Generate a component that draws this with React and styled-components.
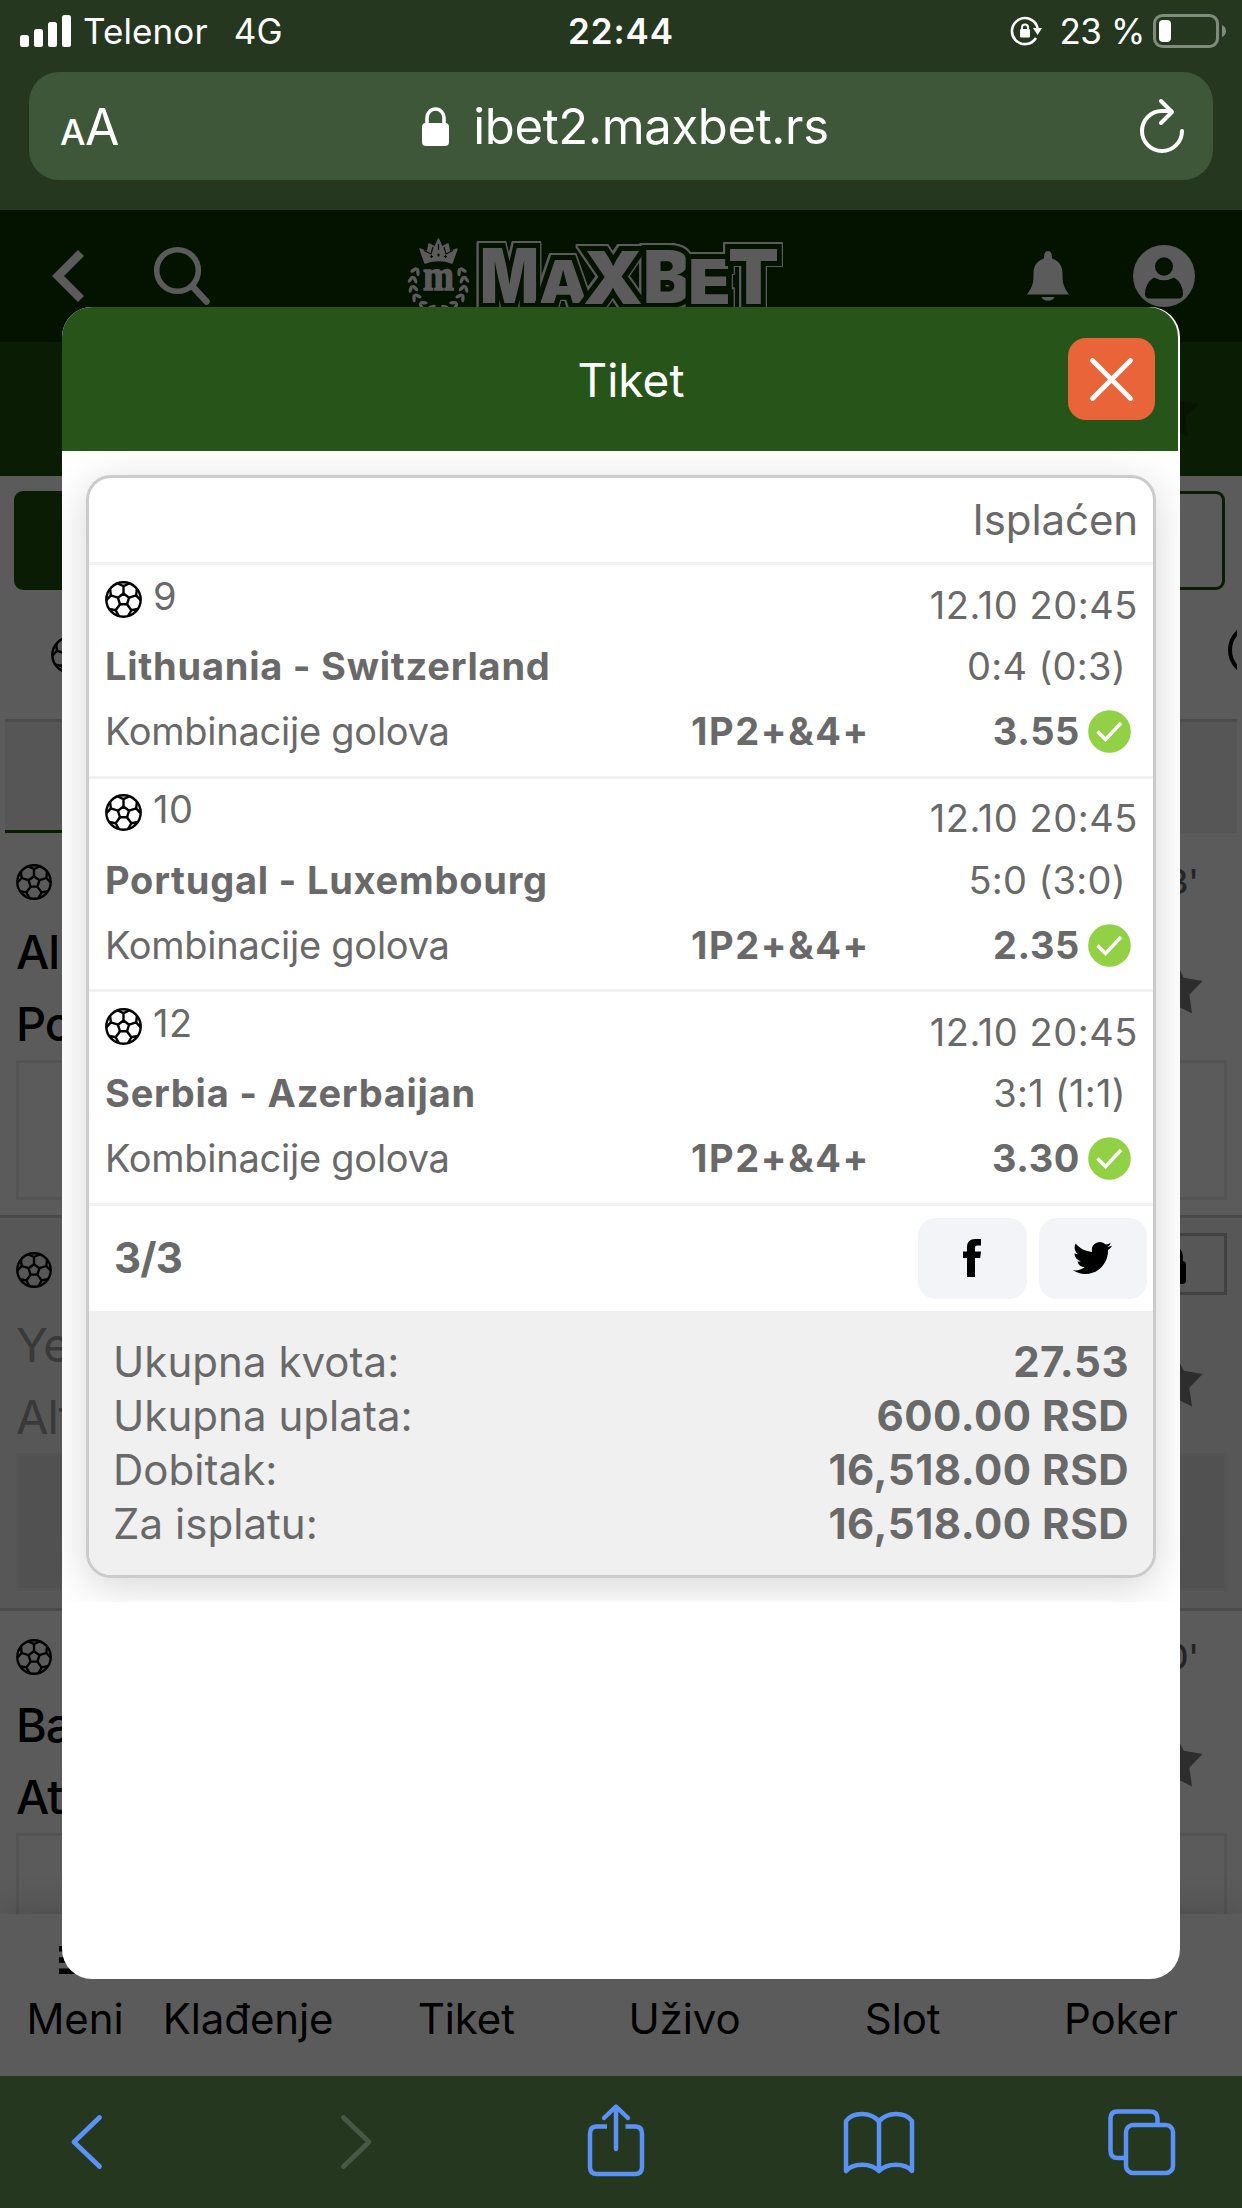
import React from "react";
import styled, { createGlobalStyle } from "styled-components";

const C = {
  chrome: "#25371f",
  field: "#3f5739",
  dim: "#5b5b5b",
  header: "#041200",
  band: "#0b1c04",
  green: "#275519",
  text: "#696969",
  blue: "#5a92f5",
};

const GlobalStyle = createGlobalStyle`
  * { box-sizing: border-box; }
  body { margin: 0; }
  svg { display: block; flex: none; overflow: visible; }
`;

const Screen = styled.div`
  width: 1242px;
  height: 2208px;
  display: flex;
  flex-direction: column;
  overflow: hidden;
  background: ${C.dim};
  font-family: Inter, "Liberation Sans", sans-serif;
  font-feature-settings: "calt" 0;
  white-space: nowrap;
`;

/* ---------- browser chrome ---------- */
const Chrome = styled.header`
  flex: none;
  height: 210px;
  background: ${C.chrome};
  color: #fff;
`;
const StatusBar = styled.div`
  height: 72px;
  padding: 0 16px 10px 20px;
  display: grid;
  grid-template-columns: 1fr auto 1fr;
  align-items: center;
  font-size: 35px;
`;
const StatusSide = styled.div`
  display: flex;
  align-items: center;
  justify-content: ${(p) => (p.$end ? "flex-end" : "flex-start")};
`;
const Carrier = styled.span`
  margin-left: 12px;
  letter-spacing: 0.1px;
`;
const Network = styled.span`
  margin-left: 26px;
  letter-spacing: 0.2px;
`;
const Time = styled.span`
  margin-right: 4px;
  font-weight: 600;
  letter-spacing: 0.9px;
`;
const Percent = styled.span`
  margin: 0 8px 0 17px;
  letter-spacing: -0.4px;
`;
const AddressBar = styled.div`
  height: 108px;
  margin: 0 29px;
  padding: 0 29px 0 31px;
  border-radius: 30px;
  background: ${C.field};
  display: grid;
  grid-template-columns: 57px 1fr 44px;
  align-items: center;
`;
const TextSize = styled.span`
  display: flex;
  align-items: baseline;
  gap: 1px;
  padding-top: 2px;
  font-size: 50px;
  letter-spacing: -1.5px;
`;
const SmallA = styled.span`
  font-size: 36px;
  font-weight: 500;
`;
const Address = styled.div`
  display: flex;
  align-items: center;
  justify-content: center;
  gap: 24px;
  padding-right: 6px;
  font-size: 49px;
  letter-spacing: -0.35px;
`;

/* ---------- page behind the dialog ---------- */
const Page = styled.main`
  position: relative;
  flex: 1;
  min-height: 0;
  display: flex;
  flex-direction: column;
`;
const PageHeader = styled.div`
  flex: none;
  height: 132px;
  padding: 0 47px 0 53px;
  display: flex;
  align-items: center;
  background: ${C.header};
`;
const Spacer = styled.div`
  flex: none;
  width: ${(p) => p.$w}px;
`;
const Band = styled.div`
  flex: none;
  height: 134px;
  padding: 8px 42px 0 0;
  display: flex;
  justify-content: flex-end;
  align-items: center;
  background: ${C.band};
`;
const Switcher = styled.div`
  flex: none;
  height: 114px;
  padding: 15px 17px 0 14px;
  display: flex;
`;
const SwitchHalf = styled.div`
  flex: 1;
  border: 3px solid ${C.band};
  border-radius: ${(p) => (p.$on ? "9px 0 0 9px" : "0 9px 9px 0")};
  background: ${(p) => (p.$on ? C.band : "transparent")};
`;
const Sports = styled.div`
  flex: none;
  height: 129px;
  margin: 0 5px;
  padding: 0 0 0 46px;
  display: flex;
  align-items: center;
  justify-content: space-between;
  overflow: hidden;
`;
const SportRing = styled.div`
  flex: none;
  width: 54px;
  height: 54px;
  margin: 0 -45px 10px 0;
  border: 4px solid #000;
  border-radius: 50%;
`;
const Tabs = styled.div`
  flex: none;
  height: 114px;
  margin: 0 5px;
  display: flex;
  border-top: 3px solid #4c4c4c;
  background: #565656;
`;
const Tab = styled.div`
  flex: 1;
  border-bottom: 3px solid ${(p) => (p.$on ? C.band : "#565656")};
`;
const Events = styled.div`
  flex: 1;
  min-height: 0;
  overflow: hidden;
`;
const Event = styled.div`
  height: ${(p) => p.$h}px;
  padding: 0 15px 0 16px;
  border-bottom: 3px solid #4a4a4a;
  background: ${(p) => (p.$locked ? "#575757" : C.dim)};
`;
const EventHead = styled.div`
  height: ${(p) => p.$h}px;
  padding-top: ${(p) => p.$top}px;
  display: flex;
  align-items: flex-start;
  justify-content: space-between;
`;
const Minute = styled.span`
  margin-right: 28px;
  font-size: 34px;
  line-height: 35px;
  font-weight: 500;
  color: #242424;
`;
const LockBox = styled.div`
  width: 110px;
  height: 62px;
  margin-top: -19px;
  border: 3px solid #424242;
  display: flex;
  align-items: center;
  justify-content: center;
`;
const Teams = styled.div`
  height: 144px;
  padding: 0 23px 0 0;
  display: flex;
  align-items: center;
  justify-content: space-between;
  color: ${(p) => (p.$locked ? "#393939" : "#000")};
  font-size: 47px;
  line-height: 72px;
  font-weight: ${(p) => (p.$locked ? 400 : 500)};
  letter-spacing: -1px;
`;
const Favourite = styled.div`
  padding-top: 4px;
`;
const OddsBox = styled.div`
  height: ${(p) => (p.$locked ? 138 : 140)}px;
  border: 3px solid #545454;
  background: ${(p) => (p.$locked ? "#515151" : "transparent")};
`;
const BottomNav = styled.nav`
  flex: none;
  position: relative;
  height: 162px;
  padding: 0 12px 0 11px;
  display: grid;
  grid-template-columns: 128px repeat(5, 1fr);
  background: ${C.dim};
  box-shadow: 0 0 36px rgba(0, 0, 0, 0.2);
`;
const NavItem = styled.div`
  display: flex;
  flex-direction: column;
  align-items: center;
  font-size: 42px;
  line-height: 28px;
  letter-spacing: -0.1px;
  color: #000;
`;
const NavIcon = styled.div`
  height: 91px;
  display: flex;
  align-items: center;
`;

/* ---------- ticket dialog ---------- */
const Dialog = styled.section`
  position: absolute;
  left: 62px;
  top: 97px;
  width: 1118px;
  height: 1672px;
  border-radius: 30px;
  background: #fff;
  overflow: hidden;
  color: ${C.text};
`;
const DialogHeader = styled.div`
  height: 144px;
  margin-right: 2px;
  padding: 0 23px 0 132px;
  display: flex;
  align-items: center;
  border-top-right-radius: 30px;
  background: ${C.green};
`;
const Title = styled.h1`
  flex: 1;
  margin: 0;
  padding-top: 1px;
  text-align: center;
  font-size: 46px;
  font-weight: 400;
  color: #fff;
`;
const CloseButton = styled.button`
  width: 87px;
  height: 82px;
  padding: 0;
  border: 0;
  border-radius: 18px;
  background: #ea6439;
  display: flex;
  align-items: center;
  justify-content: center;
`;
const TicketArea = styled.div`
  height: 1151px;
  padding: 24px;
  overflow: hidden;
`;
const Ticket = styled.div`
  height: 1103px;
  border: 3px solid #cbcbcb;
  border-radius: 25px;
  background: #fff;
  box-shadow: 0 9px 42px rgba(0, 0, 0, 0.16);
  display: flex;
  flex-direction: column;
  overflow: hidden;
`;
const TicketStatus = styled.div`
  height: 87px;
  padding: 0 15px 0 0;
  border-bottom: 3px solid #f1f1f1;
  font-size: 42px;
  line-height: 83px;
  letter-spacing: -0.1px;
  text-align: right;
`;
const Pick = styled.article`
  height: 213.67px;
  padding-top: 4px;
  border-bottom: 3px solid #f1f1f1;
  font-size: 38px;
`;
const PickTop = styled.div`
  height: 60px;
  padding: 0 15px 0 16px;
  display: flex;
  align-items: center;
`;
const PickNumber = styled.span`
  flex: 1;
  margin-left: 11px;
  padding-bottom: 7px;
  letter-spacing: 0.5px;
`;
const PickDate = styled.span`
  padding-top: 11px;
  letter-spacing: 0.55px;
`;
const PickMatch = styled.div`
  height: 73px;
  padding: 1px 27px 0 16px;
  display: flex;
  align-items: center;
  justify-content: space-between;
`;
const Match = styled.strong`
  font-weight: 700;
  letter-spacing: 0.76px;
`;
const Score = styled.span`
  letter-spacing: 0.3px;
`;
const PickBet = styled.div`
  height: 59px;
  padding: 0 22px 0 16px;
  display: grid;
  grid-template-columns: 1fr 248px 149px 43px;
  align-items: center;
`;
const Market = styled.span`
  padding-bottom: 1px;
  letter-spacing: -0.25px;
`;
const Code = styled.strong`
  font-weight: 700;
  padding-bottom: 1px;
  letter-spacing: 1.6px;
`;
const Odd = styled.strong`
  font-weight: 700;
  text-align: right;
  padding: 0 8px 1px 0;
  letter-spacing: 0.6px;
`;
const ShareRow = styled.div`
  height: 105px;
  padding: 0 6px 0 25px;
  display: flex;
  align-items: center;
  gap: 12px;
`;
const Count = styled.strong`
  flex: 1;
  padding-bottom: 2px;
  font-size: 42px;
  font-weight: 700;
  letter-spacing: -0.8px;
`;
const ShareButton = styled.button`
  width: 108.500px;
  height: 81px;
  padding: 0;
  border: 0;
  border-radius: 18px;
  background: #f3f4f7;
  display: flex;
  align-items: center;
  justify-content: center;
`;
const Summary = styled.div`
  flex: 1;
  padding: 24px 24px 0 24px;
  background: #f0f0f0;
`;
const SummaryRow = styled.div`
  display: flex;
  justify-content: space-between;
  font-size: 42px;
  line-height: 54px;
  letter-spacing: 0.05px;
`;
const Amount = styled.strong`
  font-weight: 700;
  letter-spacing: 0.5px;
`;

/* ---------- browser toolbar ---------- */
const Toolbar = styled.footer`
  flex: none;
  position: relative;
  height: 132px;
  display: grid;
  grid-template-columns: 173px 367px 152px 374px 151px;
  align-items: center;
  justify-items: center;
  background: ${C.chrome};
`;

/* ---------- drawings ---------- */
const pt = (r, deg) => {
  const a = (deg * Math.PI) / 180;
  return `${(50 + r * Math.cos(a)).toFixed(1)} ${(50 + r * Math.sin(a)).toFixed(1)}`;
};
const spokes = [-90, -18, 54, 126, 198];

const Ball = ({ size = 37 }) => (
  <svg width={size} height={size} viewBox="0 0 100 100" fill="none" stroke="#000" strokeWidth="6.500" strokeLinejoin="round">
    <circle cx="50" cy="50" r="46.500" />
    <path d={`M${spokes.map((a) => pt(16, a)).join("L")}Z`} />
    {spokes.map((a) => (
      <path key={a} d={`M${pt(16, a)}L${pt(36, a)}M${pt(46, a - 20)}L${pt(36, a)}L${pt(46, a + 20)}`} />
    ))}
  </svg>
);

const Star = ({ fill = "#2d2d2d" }) => {
  const p = [];
  for (let i = 0; i < 10; i++) p.push(pt(i % 2 ? 26 : 50, -90 + i * 36));
  return (
    <svg width="58" height="58" viewBox="0 0 100 100">
      <path d={`M${p.join("L")}Z`} fill={fill} />
    </svg>
  );
};

const Signal = () => (
  <svg width="51" height="32" viewBox="0 0 51 32" fill="#fff">
    <rect x="0" y="20" width="9" height="12" rx="2.5" />
    <rect x="14" y="14" width="9" height="18" rx="2.5" />
    <rect x="28" y="7" width="9" height="25" rx="2.5" />
    <rect x="42" y="0" width="9" height="32" rx="2.5" />
  </svg>
);

const RotationLock = () => (
  <svg width="32" height="30" viewBox="1011 17 32 30" fill="none" stroke="#fff" strokeWidth="2.6">
    <path d="M1037 39 A13 13 0 1 1 1038.6 29" />
    <path d="M1034 29 H1043 L1038.6 36Z" fill="#fff" stroke="none" />
    <rect x="1021" y="30" width="10" height="8.5" rx="1.2" fill="#fff" stroke="none" />
    <path d="M1023 31 V28.5 a3 3 0 0 1 6 0 V31" strokeWidth="2" />
  </svg>
);

const Battery = () => (
  <svg width="73" height="34" viewBox="0 0 73 34">
    <rect x="1.5" y="1.5" width="63" height="31" rx="8" fill="none" stroke="#7f8b7b" strokeWidth="3" />
    <rect x="6" y="6" width="12" height="22" rx="4" fill="#fff" />
    <path d="M69 11 q4 2 4 6 t-4 6z" fill="#7f8b7b" />
  </svg>
);

const Padlock = ({ fill = "#fff" }) => (
  <svg width="27" height="39" viewBox="0 0 27 39">
    <rect x="0" y="16" width="27" height="23" rx="4" fill={fill} />
    <path d="M5 18 V11 a8.5 9 0 0 1 17 0 V18" fill="none" stroke={fill} strokeWidth="3.6" />
  </svg>
);

const Reload = () => (
  <svg width="44" height="54" viewBox="1140 99 44 54" fill="none" stroke="#fff" strokeWidth="4" strokeLinecap="round" strokeLinejoin="round">
    <path d="M1182 131 A20 20 0 1 1 1162 111 H1171" />
    <path d="M1161 101 L1172 112 L1161 123" />
  </svg>
);

const Leaf = ({ a, r = 26 }) => {
  const t = (a * Math.PI) / 180;
  const x = 438.5 + r * Math.cos(t);
  const y = 284 + r * Math.sin(t);
  const d = a > 90 ? 1 : -1;
  return (
    <g transform={`translate(${x.toFixed(1)} ${y.toFixed(1)}) rotate(${a + 90})`}>
      <ellipse cx="0" cy="-2.600" rx="4" ry="1.700" transform={`rotate(${30 * d})`} />
      <ellipse cx="0" cy="2.600" rx="4" ry="1.700" transform={`rotate(${-30 * d})`} />
    </g>
  );
};

const LogoText = styled.text`
  font-family: Inter, sans-serif;
  font-weight: 900;
  fill: ${C.dim};
  stroke: ${C.header};
  stroke-width: 10px;
  paint-order: stroke;
  filter: drop-shadow(1.1px 0 0 ${C.dim}) drop-shadow(-1.1px 0 0 ${C.dim}) drop-shadow(0 1.1px 0 ${C.dim})
    drop-shadow(0 -1.1px 0 ${C.dim});
`;
const CrestLetter = styled.text`
  font-family: "Liberation Serif", serif;
  font-weight: 700;
  font-size: 45px;
  fill: ${C.dim};
  stroke: ${C.dim};
  stroke-width: 1.5px;
`;

const Logo = () => (
  <svg width="378" height="78" viewBox="408 237 378 78" role="img">
    <g fill={C.dim}>
      {[207, 187, 167, 147, 125, 103].map((a) => (
        <Leaf key={a} a={a} />
      ))}
      {[-27, -7, 13, 33, 55, 77].map((a) => (
        <Leaf key={a} a={a} />
      ))}
    </g>
    <path
      d="M425 263 L420 249 L427.500 252 L429 244 L435 247 L438.500 239 L442 247 L448 244 L449.500 252 L457 249 L452 263 Q438.500 258 425 263Z"
      fill={C.dim}
      stroke={C.dim}
      strokeWidth="1.500"
      strokeLinejoin="round"
    />
    <path d="M424 250.500 L431 254 L433 247 M453 250.500 L446 254 L444 247 M438.500 244 V250" stroke={C.header} strokeWidth="1.200" fill="none" />
    <path d="M430 256.500 h3 M437 255 h3 M444 256.500 h3 M431.500 255 v3 M438.500 253.500 v3 M445.500 255 v3" stroke={C.header} strokeWidth="1.200" />
    <CrestLetter x="423" y="290" textLength="31" lengthAdjust="spacingAndGlyphs">
      m
    </CrestLetter>
    <LogoText>
      <tspan x="480" y="303" fontSize="75" textLength="59" lengthAdjust="spacingAndGlyphs">M</tspan>
      <tspan x="539" y="303" fontSize="59" textLength="49" lengthAdjust="spacingAndGlyphs">A</tspan>
      <tspan x="583" y="304" fontSize="73" textLength="60" lengthAdjust="spacingAndGlyphs">X</tspan>
      <tspan x="643" y="303" fontSize="73" textLength="48" lengthAdjust="spacingAndGlyphs">B</tspan>
      <tspan x="688" y="304" fontSize="62" textLength="43" lengthAdjust="spacingAndGlyphs">E</tspan>
      <tspan x="728" y="304" fontSize="76" textLength="51" lengthAdjust="spacingAndGlyphs">T</tspan>
    </LogoText>
  </svg>
);

const Facebook = () => (
  <svg width="18" height="38" viewBox="0 0 18 38">
    <path d="M4 38V19H0V12.500H4V8.500C4 3 7 0 12.300 0H18V6.500H14.500C12.500 6.500 12 7.500 12 9V12.500H18L17.200 19H12V38Z" />
  </svg>
);
const Twitter = () => (
  <svg width="39" height="32" viewBox="0 2.200 24 19.600" preserveAspectRatio="none">
    <path d="M23.953 4.570a10 10 0 0 1-2.825.775 4.958 4.958 0 0 0 2.163-2.723c-.951.555-2.005.959-3.127 1.184a4.920 4.920 0 0 0-8.384 4.482C7.690 8.095 4.067 6.130 1.640 3.162a4.822 4.822 0 0 0-.666 2.475c0 1.710.870 3.213 2.188 4.096a4.904 4.904 0 0 1-2.228-.616v.060a4.923 4.923 0 0 0 3.946 4.827 4.996 4.996 0 0 1-2.212.085 4.936 4.936 0 0 0 4.604 3.417 9.867 9.867 0 0 1-6.102 2.105c-.390 0-.779-.023-1.170-.067a13.995 13.995 0 0 0 7.557 2.209c9.053 0 13.998-7.496 13.998-13.985 0-.210 0-.420-.015-.630A9.935 9.935 0 0 0 24 4.590z" />
  </svg>
);
const Check = () => (
  <svg width="43" height="43" viewBox="0 0 43 43">
    <circle cx="21.500" cy="21.500" r="21.300" fill="#92d146" />
    <path d="M9.500 21.500 L17.500 29.500 L33 13" fill="none" stroke="#fff" strokeWidth="3.400" />
  </svg>
);

/* ---------- data ---------- */
const picks = [
  { no: "9", date: "12.10 20:45", match: "Lithuania - Switzerland", score: "0:4 (0:3)", odd: "3.55" },
  { no: "10", date: "12.10 20:45", match: "Portugal - Luxembourg", score: "5:0 (3:0)", odd: "2.35" },
  { no: "12", date: "12.10 20:45", match: "Serbia - Azerbaijan", score: "3:1 (1:1)", odd: "3.30" },
];
const totals = [
  ["Ukupna kvota:", "27.53"],
  ["Ukupna uplata:", "600.00 RSD"],
  ["Dobitak:", "16,518.00 RSD"],
  ["Za isplatu:", "16,518.00 RSD"],
];
const events = [
  { home: "Al", away: "Po", minute: "3'", h: 385, head: 83, top: 31 },
  { home: "Ye", away: "Alt", locked: true, h: 393, head: 91, top: 34 },
  { home: "Ba", away: "At", minute: "0'", h: 393, head: 78, top: 28 },
];
const nav = ["Meni", "Klađenje", "Tiket", "Uživo", "Slot", "Poker"];

export default function App() {
  return (
    <Screen>
      <GlobalStyle />
      <Chrome>
        <StatusBar>
          <StatusSide>
            <Signal />
            <Carrier>Telenor</Carrier>
            <Network>4G</Network>
          </StatusSide>
          <Time>22:44</Time>
          <StatusSide $end>
            <RotationLock />
            <Percent>23 %</Percent>
            <Battery />
          </StatusSide>
        </StatusBar>
        <AddressBar>
          <TextSize>
            <SmallA>A</SmallA>A
          </TextSize>
          <Address>
            <Padlock />
            ibet2.maxbet.rs
          </Address>
          <Reload />
        </AddressBar>
      </Chrome>

      <Page>
        <PageHeader>
          <svg width="31" height="52" viewBox="53 249 31 52" fill="none" stroke={C.dim} strokeWidth="8.500">
            <path d="M81 252 L58 275 L81 298" />
          </svg>
          <Spacer $w={70} />
          <svg width="56" height="59" viewBox="154 247 56 59" fill="none" stroke={C.dim} strokeLinecap="round">
            <circle cx="177.500" cy="270.500" r="20.800" strokeWidth="5.600" />
            <path d="M193 287 L206.500 301.500" strokeWidth="6.500" />
          </svg>
          <Spacer $w={198} />
          <Logo />
          <Spacer $w={241} />
          <svg width="42" height="50" viewBox="0 0 42 50" fill={C.dim}>
            <path d="M21 0 C24 0 25 2.500 25 7.500 C32 10 35.500 15 35.500 22 C35.500 32 36 35 42 43.500 H0 C6 35 6.500 32 6.500 22 C6.500 15 10 10 17 7.500 C17 2.500 18 0 21 0Z" />
            <path d="M14.500 46 H27.500 C26 51 16 51 14.500 46Z" />
          </svg>
          <Spacer $w={64} />
          <svg width="62" height="62" viewBox="0 0 62 62">
            <circle cx="31" cy="31" r="31" fill={C.dim} />
            <ellipse cx="31" cy="21.500" rx="9" ry="9.300" fill={C.header} />
            <path d="M21 32.500 Q31 38 41 32.500 Q50 38 50 49 Q50 53.500 45.500 53.500 H16.500 Q12 53.500 12 49 Q12 38 21 32.500Z" fill={C.header} />
          </svg>
        </PageHeader>
        <Band>
          <Star fill="#081503" />
        </Band>
        <Switcher>
          <SwitchHalf $on />
          <SwitchHalf />
        </Switcher>
        <Sports>
          <Ball size={38} />
          <SportRing />
        </Sports>
        <Tabs>
          <Tab $on />
          <Tab />
          <Tab />
        </Tabs>
        <Events>
          {events.map((e) => (
            <Event key={e.home} $h={e.h} $locked={e.locked}>
              <EventHead $h={e.head} $top={e.top}>
                <Ball size={36} />
                {e.locked ? (
                  <LockBox>
                    <Padlock fill="#000" />
                  </LockBox>
                ) : (
                  <Minute>{e.minute}</Minute>
                )}
              </EventHead>
              <Teams $locked={e.locked}>
                <div>
                  <div>{e.home}</div>
                  <div>{e.away}</div>
                </div>
                <Favourite>
                  <Star />
                </Favourite>
              </Teams>
              <OddsBox $locked={e.locked} />
            </Event>
          ))}
        </Events>
        <BottomNav>
          {nav.map((label, i) => (
            <NavItem key={label}>
              <NavIcon>
                {i === 0 && (
                  <svg width="32" height="28" viewBox="0 0 32 28">
                    <path d="M0 2.750H32M0 14H32M0 25.250H32" stroke="#000" strokeWidth="5.500" />
                  </svg>
                )}
              </NavIcon>
              {label}
            </NavItem>
          ))}
        </BottomNav>

        <Dialog>
          <DialogHeader>
            <Title>Tiket</Title>
            <CloseButton>
              <svg width="43" height="43" viewBox="0 0 43 43" stroke="#fff" strokeWidth="4.800" strokeLinecap="round">
                <path d="M2.500 2.500 L40.500 40.500 M40.500 2.500 L2.500 40.500" />
              </svg>
            </CloseButton>
          </DialogHeader>
          <TicketArea>
            <Ticket>
              <TicketStatus>Isplaćen</TicketStatus>
              {picks.map((p) => (
                <Pick key={p.no}>
                  <PickTop>
                    <Ball />
                    <PickNumber>{p.no}</PickNumber>
                    <PickDate>{p.date}</PickDate>
                  </PickTop>
                  <PickMatch>
                    <Match>{p.match}</Match>
                    <Score>{p.score}</Score>
                  </PickMatch>
                  <PickBet>
                    <Market>Kombinacije golova</Market>
                    <Code>1P2+&amp;4+</Code>
                    <Odd>{p.odd}</Odd>
                    <Check />
                  </PickBet>
                </Pick>
              ))}
              <ShareRow>
                <Count>3/3</Count>
                <ShareButton>
                  <Facebook />
                </ShareButton>
                <ShareButton>
                  <Twitter />
                </ShareButton>
              </ShareRow>
              <Summary>
                {totals.map(([label, value]) => (
                  <SummaryRow key={label}>
                    <span>{label}</span>
                    <Amount>{value}</Amount>
                  </SummaryRow>
                ))}
              </Summary>
            </Ticket>
          </TicketArea>
        </Dialog>
      </Page>

      <Toolbar>
        <svg width="31" height="54" viewBox="0 0 31 54" fill="none" stroke={C.blue} strokeWidth="4.800" strokeLinecap="round" strokeLinejoin="round">
          <path d="M28.500 2.500 L3 27 L28.500 51.500" />
        </svg>
        <svg width="31" height="54" viewBox="0 0 31 54" fill="none" stroke="#495846" strokeWidth="4.800" strokeLinecap="round" strokeLinejoin="round">
          <path d="M2.500 2.500 L28 27 L2.500 51.500" />
        </svg>
        <svg width="56" height="72" viewBox="588 2106 56 72" fill="none" stroke={C.blue} strokeWidth="4.500">
          <path d="M607 2126.500 H597 Q590 2126.500 590 2133.500 V2167 Q590 2174 597 2174 H635 Q642 2174 642 2167 V2133.500 Q642 2126.500 635 2126.500 H625.500" />
          <path d="M616 2149 V2107 M604 2118 L616 2106.500 L628 2118" strokeLinecap="round" strokeLinejoin="round" />
        </svg>
        <svg width="70" height="60" viewBox="844 2112 70 60" fill="none" stroke={C.blue} strokeWidth="4.500" strokeLinejoin="round">
          <path d="M846 2171 V2121 C853 2111.500 871 2111.500 879 2121.500 C887 2111.500 905 2111.500 912 2121 V2171 C905 2162.500 887 2162.500 879 2171 C871 2162.500 853 2162.500 846 2171Z M879 2121.500 V2171" />
        </svg>
        <svg width="67" height="66" viewBox="1108 2109 67 66" fill="none" stroke={C.blue} strokeWidth="4.500">
          <rect x="1126" y="2125" width="47" height="48" rx="7" />
          <path d="M1126 2158 H1118 Q1110.500 2158 1110.500 2150.500 V2118.500 Q1110.500 2111.500 1117.500 2111.500 H1150 Q1157.500 2111.500 1157.500 2118.500 V2125" />
        </svg>
      </Toolbar>
    </Screen>
  );
}
